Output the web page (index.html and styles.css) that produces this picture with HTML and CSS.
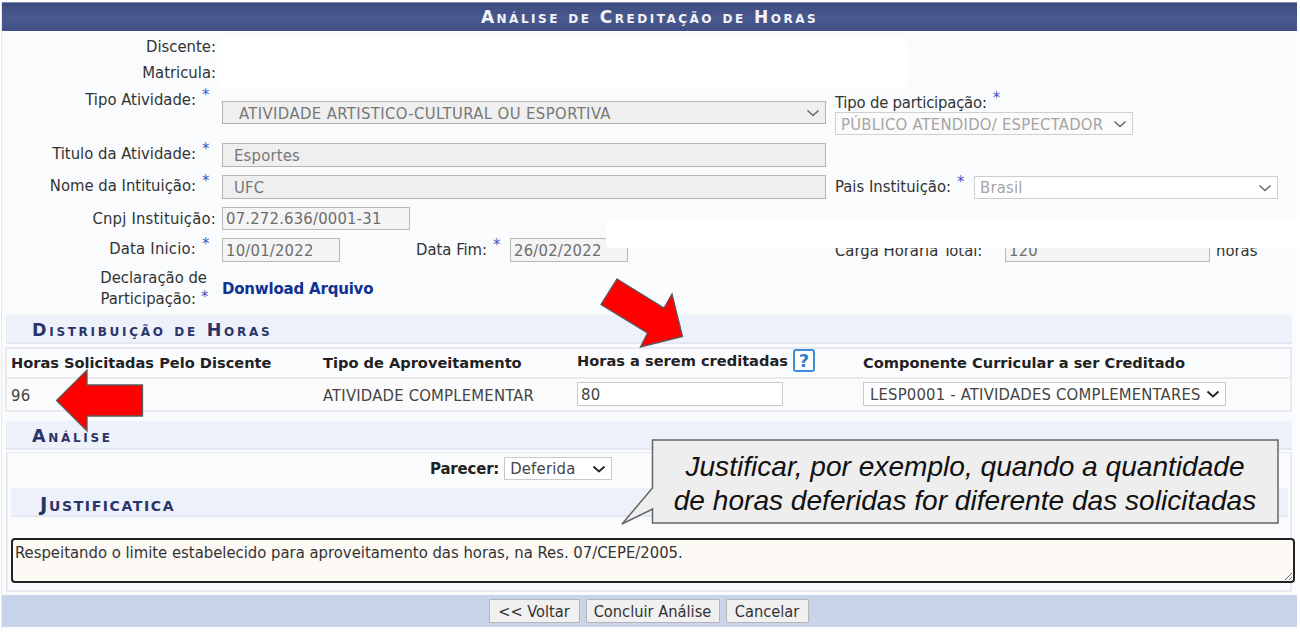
FILE: index.html
```html
<!DOCTYPE html>
<html lang="pt-BR">
<head>
<meta charset="utf-8">
<title>Análise de Creditação de Horas</title>
<link rel="stylesheet" href="styles.css">
</head>
<body>
<main class="page">
  <h1 class="title">Análise de Creditação de Horas</h1>
  <section class="fields">
    <div class="row r-name"><span class="lbl">Discente:</span></div>
    <div class="row r-name"><span class="lbl">Matricula:</span></div>
    <div class="row r-tipo">
      <span class="lbl">Tipo Atividade:<i class="req">*</i></span>
      <select class="ctl sel-tipo wide" disabled><option>ATIVIDADE ARTISTICO-CULTURAL OU ESPORTIVA</option></select>
      <div class="part">
        <span class="side part-lbl">Tipo de participação:<i class="req">*</i></span>
        <select class="ctl sel-part" disabled><option>PÚBLICO ATENDIDO/ ESPECTADOR</option></select>
      </div>
    </div>
    <div class="row r-titulo">
      <span class="lbl">Titulo da Atividade:<i class="req">*</i></span>
      <input class="ctl ro wide" value="Esportes" disabled>
    </div>
    <div class="row r-nome">
      <span class="lbl">Nome da Intituição:<i class="req">*</i></span>
      <input class="ctl ro wide" value="UFC" disabled>
      <span class="side pais">Pais Instituição:<i class="req">*</i></span>
      <select class="ctl sel-pais" disabled><option>Brasil</option></select>
    </div>
    <div class="row r-cnpj">
      <span class="lbl plain">Cnpj Instituição:</span>
      <input class="ctl soft cnpj" value="07.272.636/0001-31" readonly>
    </div>
    <div class="row r-data">
      <span class="lbl plain">Data Inicio:<i class="req">*</i></span>
      <input class="ctl soft date" value="10/01/2022" readonly>
      <span class="side fim">Data Fim:<i class="req">*</i></span>
      <input class="ctl soft date" value="26/02/2022" readonly>
      <span class="side carga">Carga Horaria Total:</span>
      <input class="ctl soft total" value="120" readonly>
      <span class="side horas">horas</span>
    </div>
    <div class="row r-decl">
      <span class="lbl decl"><span class="decl-top">Declaração de</span>Participação:<i class="req">*</i></span>
      <a class="link" href="#">Donwload Arquivo</a>
    </div>
  </section>

  <h2 class="band">Distribuição de Horas</h2>
  <table class="dist">
    <thead>
      <tr>
        <th class="c1">Horas Solicitadas Pelo Discente</th>
        <th class="c2">Tipo de Aproveitamento</th>
        <th class="c3"><span class="hc">Horas a serem creditadas <b class="help">?</b></span></th>
        <th class="c4">Componente Curricular a ser Creditado</th>
      </tr>
    </thead>
    <tbody>
      <tr>
        <td class="first">96</td>
        <td>ATIVIDADE COMPLEMENTAR</td>
        <td class="boxed"><input class="ctl plainbox hours" value="80"></td>
        <td class="boxed"><select class="ctl plainbox comp"><option>LESP0001 - ATIVIDADES COMPLEMENTARES</option></select></td>
      </tr>
    </tbody>
  </table>

  <h2 class="band band-an">Análise</h2>
  <section class="panel">
    <div class="parecer">
      <label class="strong">Parecer:</label>
      <select class="ctl plainbox sel-par"><option>Deferida</option></select>
    </div>
    <h3 class="band band-just">Justificatica</h3>
    <textarea class="just">Respeitando o limite estabelecido para aproveitamento das horas, na Res. 07/CEPE/2005.</textarea>
  </section>

  <footer class="actions">
    <button class="btn b1" type="button">&lt;&lt; Voltar</button>
    <button class="btn b2" type="button">Concluir Análise</button>
    <button class="btn b3" type="button">Cancelar</button>
  </footer>
</main>

<div class="mask mask-a"></div>
<div class="mask mask-b"></div>

<svg class="arrow arrow-a" viewBox="0 0 90 75" aria-hidden="true"><polygon points="21,4 68,33 76,19 86.500,61.500 44.500,72 51.500,58 5,29.500"/></svg>
<svg class="arrow arrow-b" viewBox="0 0 95 67" aria-hidden="true"><polygon points="3.500,33.500 34,3 34,18 89.500,18 89.500,49 34,49 34,64"/></svg>

<aside class="note">
  <svg class="note-shape" viewBox="0 0 660 90" aria-hidden="true"><polygon points="31.500,1 657,1 657,84 31.500,84 31.500,70 1,85 31.500,49"/></svg>
  <p class="note-text">Justificar, por exemplo, quando a quantidade<br>de horas deferidas for diferente das solicitadas</p>
</aside>
</body>
</html>
```
FILE: styles.css
```css
* { box-sizing: border-box; }
html, body { margin: 0; height: 632px; overflow: hidden; }
body {
  background: #fff;
  font-family: "DejaVu Sans Condensed", "DejaVu Sans", sans-serif;
  font-size: 16.5px;
  letter-spacing: .2px;
  color: #333;
  position: relative;
}
.page {
  width: 1296px;
  height: 628px;
  margin: 2px 0 0 1px;
  background: #f9fbfd;
  display: flex;
  flex-direction: column;
  border-left: 1px solid #e6e8ee;
}
.title {
  margin: 0;
  height: 29px;
  line-height: 29px;
  text-align: center;
  color: #f2f4f9;
  font-size: 17px;
  font-weight: bold;
  font-variant: small-caps;
  font-family: "DejaVu Sans", sans-serif;
  letter-spacing: 2.500px;
  background: linear-gradient(#3b4a80, #4a5a8e 55%, #3f4e84);
  border-top: 1px solid #8089ab;
}
.fields { height: 284px; padding-top: 3px; }
.row { display: flex; align-items: flex-start; }
.lbl { width: 214px; flex: none; text-align: right; line-height: 20px; white-space: nowrap; padding-top: 1px; letter-spacing: 0; }
.plain { letter-spacing: .2px; }
.r-name { height: 26px; }
.r-name .lbl { line-height: 26px; padding-top: 0; }
.r-tipo { height: 57px; }
.r-tipo .lbl { padding-top: 4px; }
.r-titulo { height: 32px; }
.r-nome { height: 32px; }
.r-cnpj { height: 31px; }
.r-cnpj .lbl { padding-top: 2px; }
.r-data { height: 32px; }
.r-decl { height: 45px; }
.req {
  display: inline-block;
  width: 20px;
  padding-left: 6px;
  text-align: left;
  font-style: normal;
  color: #3a55c4;
  line-height: 10px;
  vertical-align: 5px;
}
.ctl {
  height: 24px;
  margin: 0 0 0 6px;
  padding: 0 2px;
  font: 16.5px "DejaVu Sans Condensed", "DejaVu Sans", sans-serif;
  letter-spacing: .2px;
  border: 1px solid #b4b4b4;
  border-radius: 0;
  color: #777;
  background-color: #efefef;
  flex: none;
}
select.ctl {
  appearance: none;
  background-image: url("data:image/svg+xml,%3Csvg xmlns='http://www.w3.org/2000/svg' width='14' height='8'%3E%3Cpath d='M1.500 1.500 7 6.500 12.500 1.500' fill='none' stroke='%23222' stroke-width='1.800'/%3E%3C/svg%3E");
  background-repeat: no-repeat;
  background-position: right 5px center;
}
select.ctl:disabled {
  background-image: url("data:image/svg+xml,%3Csvg xmlns='http://www.w3.org/2000/svg' width='14' height='8'%3E%3Cpath d='M1.500 1.500 7 6.500 12.500 1.500' fill='none' stroke='%23666' stroke-width='1.500'/%3E%3C/svg%3E");
}
.wide { width: 604px; }
.ctl:disabled { opacity: 1; }
.ro { padding-left: 11px; padding-top: 1px; }
.sel-tipo { margin-top: 15px; height: 23px; padding: 1px 2px 0 16px; letter-spacing: .4px; }
.part { margin: 7px 0 0 9px; display: flex; flex-direction: column; }
.part .ctl { margin-top: -1px; }
.side { line-height: 20px; flex: none; white-space: nowrap; letter-spacing: 0; }
.part-lbl { letter-spacing: -.2px; }
.sel-part {
  margin: 0;
  width: 298px;
  height: 23px;
  padding: 1px 2px 0 5px;
  letter-spacing: .25px;
  background-color: #fbfbfb;
  border-color: #d0d0d0;
  color: #a5a5a5;
}
.pais { margin: 2px 0 0 9px; width: 139px; }
.sel-pais {
  margin: 1px 0 0 0;
  width: 304px;
  height: 23px;
  padding-left: 5px;
  background-color: #fff;
  border-color: #cfcfcf;
  color: #a5a5a5;
}
.soft { background-color: #f4f4f4; border-color: #b8b8b8; color: #6d6d6d; padding-left: 3px; }
.cnpj { width: 188px; height: 23px; }
.date { width: 118px; }
.r-data .lbl { padding-top: 1px; }
.fim { margin: 2px 0 0 76px; width: 88px; padding-left: 0; }
.fim + .ctl { margin-left: 6px; }
.carga { margin: 3px 0 0 207px; width: 164px; }
.total { margin-left: 6px; width: 205px; }
.horas { margin: 3px 0 0 6px; }
.decl { line-height: 21px; padding-top: 0; margin-top: -3px; }
.decl-top { display: block; padding-right: 9px; }
.decl .req { padding-left: 5px; line-height: 8px; vertical-align: 2px; }
.link {
  margin: 10px 0 0 6px;
  font: bold 15px "DejaVu Sans", sans-serif;
  color: #0f3192;
  text-decoration: none;
  letter-spacing: -.2px;
}
.band {
  margin: 0 5px 0 4px;
  height: 29px;
  padding-left: 26px;
  background: #edf1f9;
  color: #2b3468;
  font: bold 17.500px/31px "DejaVu Sans", sans-serif;
  font-variant: small-caps;
  letter-spacing: 2.700px;
  border-bottom: 2px solid #e3e7f1;
}
.band-an { margin-top: 9px; }
.dist {
  margin: 3px 4px 0 3px;
  width: 1287px;
  flex: none;
  table-layout: fixed;
  border-collapse: collapse;
  border: 2px solid #e8eaef;
  background: #fbfbfc;
}
.c1 { width: 312px; }
.c2 { width: 254px; }
.c3 { width: 286px; }
.dist th {
  height: 30px;
  padding: 0 0 2px 5px;
  text-align: left;
  font: bold 14.600px "DejaVu Sans", sans-serif;
  letter-spacing: 0;
  color: #222;
  background: #fbfcfd;
  border-bottom: 2px solid #e8eaef;
}
.dist th.c1 { padding-left: 4px; }
.dist td { height: 33px; padding: 2px 0 0 5px; color: #444; }
.dist td.first { padding-left: 4px; }
.dist td.boxed { padding: 0 0 2px 5px; }
.dist .ctl { margin: 0; height: 24px; padding-top: 2px; }
.hc { display: flex; align-items: center; gap: 5px; margin-top: -4px; }
.help {
  width: 22px;
  height: 23px;
  line-height: 20px;
  text-align: center;
  color: #2f7fd0;
  font-size: 18px;
  background: #fff;
  border: 2px solid #3e8edb;
  border-radius: 3px;
}
.plainbox { background-color: #fff; border-color: #c9c9c9; color: #444; padding-left: 6px; }
input.hours { width: 206px; padding-left: 3px; }
.comp { width: 363px; }
.panel {
  margin: 2px 5px 0 4px;
  height: 140px;
  border: 2px solid #e8eaef;
  border-top-width: 1px;
  flex: none;
  position: relative;
}
.parecer { height: 35px; display: flex; align-items: flex-start; padding: 4px 0 0 422px; }
.strong { font: bold 15px/24px "DejaVu Sans", sans-serif; color: #222; letter-spacing: -.2px; }
.sel-par { width: 108px; height: 23px; margin-left: 5px; padding-left: 5px; }
.band-just {
  margin: 0 2px 0 3px;
  padding-left: 29px;
  font-size: 20px;
  line-height: 33px;
  letter-spacing: 1.600px;
}
.just {
  display: block;
  margin: 21px 0 0 3px;
  width: 1284px;
  height: 45px;
  padding: 3px 2px;
  background: #fdfaf5;
  border: 2px solid #222;
  border-radius: 4px;
  font: 16.5px "DejaVu Sans Condensed", "DejaVu Sans", sans-serif;
  letter-spacing: 0;
  color: #333;
  outline: none;
  position: relative;
}
.actions {
  margin-top: 3px;
  height: 32px;
  padding-right: 2px;
  background: #c8d4ea;
  display: flex;
  justify-content: center;
  align-items: center;
  gap: 6px;
}
.btn {
  height: 24px;
  padding: 0;
  font: 16.300px "DejaVu Sans Condensed", "DejaVu Sans", sans-serif;
  color: #333;
  background: #f0f0f0;
  border: 1px solid #b5b5b5;
  border-radius: 1px;
}
.b1 { width: 91px; }
.b2 { width: 134px; }
.b3 { width: 83px; }
.mask { position: absolute; background: #fff; }
.mask-a { left: 217px; top: 38px; width: 690px; height: 51px; border-radius: 6px; }
.mask-b { left: 606px; top: 218px; width: 692px; height: 30px; border-radius: 4px 0 0 4px; }
.arrow { position: absolute; overflow: visible; }
.arrow polygon { fill: #f00; stroke: #5a5a5a; stroke-width: 1.300; stroke-linejoin: miter; }
.arrow-a { left: 596px; top: 275px; width: 90px; height: 75px; }
.arrow-b { left: 53px; top: 367px; width: 95px; height: 67px; }
.note { position: absolute; left: 621px; top: 439px; width: 660px; height: 90px; }
.note-shape { position: absolute; left: 0; top: 0; width: 660px; height: 90px; }
.note-shape polygon { fill: #eee; stroke: #666; stroke-width: 1.500; }
.note-text {
  position: relative;
  margin: 0;
  padding: 11px 0 0 31px;
  width: 657px;
  text-align: center;
  font: italic 28.100px/34px "Liberation Sans", Arial, sans-serif;
  letter-spacing: 0;
  color: #111;
}
```
